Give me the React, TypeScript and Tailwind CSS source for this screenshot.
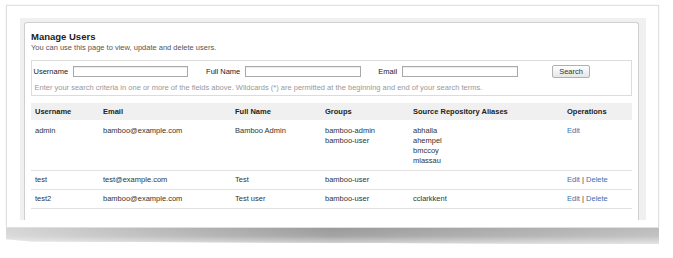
const users = [
  {
    username: "admin",
    email: "bamboo@example.com",
    fullName: "Bamboo Admin",
    groups: ["bamboo-admin", "bamboo-user"],
    aliases: ["abhalla", "ahempel", "bmccoy", "mlassau"],
    canDelete: false,
  },
  {
    username: "test",
    email: "test@example.com",
    fullName: "Test",
    groups: ["bamboo-user"],
    aliases: [],
    canDelete: true,
  },
  {
    username: "test2",
    email: "bamboo@example.com",
    fullName: "Test user",
    groups: ["bamboo-user"],
    aliases: ["cclarkkent"],
    canDelete: true,
  },
];

function SearchInput({ className = "" }: { className?: string }) {
  return (
    <input
      type="text"
      className={`h-[11px] border border-[#a9a9a9] bg-white shadow-[inset_0_1px_1px_rgba(0,0,0,0.08)] outline-none ${className}`}
    />
  );
}

export default function App() {
  return (
    <div className="h-[258px] w-[673px] overflow-hidden bg-white pl-[6px] pt-[5px] font-['Liberation_Sans',Arial,sans-serif] text-[7.5px] leading-[10px] text-[#333]">
      <div className="w-[653px]">
        <div className="h-[223px] border border-[#e0e0e0] bg-white pl-[13px] pt-[12px] shadow-[0_0_2px_rgba(0,0,0,0.08)]">
          <div className="h-[202px] w-[626px] bg-[#f0f0f0] pl-[4px] pt-[4px]">
            <div className="h-full w-[615px] rounded-t-[3px] border-l border-r border-t border-[#cfcfcf] bg-white px-[6px] pt-[8px]">
              <h1 className="text-[9.5px] font-bold leading-[12px] text-[#222]">Manage Users</h1>
              <p className="leading-[10px] text-[#555]">You can use this page to view, update and delete users.</p>

              <div className="mt-[7px] border border-[#dcdcdc] pb-[2px] pl-[1.5px] pt-[4px]">
                <div className="flex h-[13px] items-center">
                  <label className="text-[#222]">Username</label>
                  <SearchInput className="ml-[5px] w-[115px]" />
                  <label className="ml-[18px] text-[#222]">Full Name</label>
                  <SearchInput className="ml-[5px] w-[116px]" />
                  <label className="ml-[17px] text-[#222]">Email</label>
                  <SearchInput className="ml-[5px] w-[116px]" />
                  <button
                    type="button"
                    className="ml-[34px] h-[13px] w-[38px] rounded-[2px] border border-[#b0b0b0] bg-linear-to-b from-white to-[#e6e6e6] text-[7.5px] leading-[11px] text-[#333]"
                  >
                    Search
                  </button>
                </div>
                <p className="mt-[5px] pl-[1px] text-[#999]">
                  Enter your search criteria in one or more of the fields above. Wildcards (*) are permitted at the beginning and end of your search terms.
                </p>
              </div>

              <table className="mt-[7px] w-[601px] table-fixed border-collapse text-left">
                <colgroup>
                  <col className="w-[68px]" />
                  <col className="w-[132px]" />
                  <col className="w-[90px]" />
                  <col className="w-[88px]" />
                  <col className="w-[154px]" />
                  <col className="w-[69px]" />
                </colgroup>
                <thead>
                  <tr className="bg-[#f0f0f0]">
                    {["Username", "Email", "Full Name", "Groups", "Source Repository Aliases", "Operations"].map((h) => (
                      <th key={h} className="pb-[3px] pl-[4px] pt-[4px] font-bold text-[#222]">
                        {h}
                      </th>
                    ))}
                  </tr>
                </thead>
                <tbody>
                  {users.map((u, i) => {
                    const pad = i === 0 ? "pt-[6px] pb-[4px]" : "py-[4px]";
                    return (
                      <tr key={u.username} className="border-b border-[#e2e2e2] align-top">
                        <td className={`pl-[4px] ${pad}`}>{u.username}</td>
                        <td className={`pl-[4px] ${pad}`}>{u.email}</td>
                        <td className={`pl-[4px] ${pad}`}>{u.fullName}</td>
                        <td className={`pl-[4px] ${pad}`}>
                          {u.groups.map((g) => (
                            <div key={g}>{g}</div>
                          ))}
                        </td>
                        <td className={`pl-[4px] ${pad}`}>
                          {u.aliases.map((a) => (
                            <div key={a}>{a}</div>
                          ))}
                        </td>
                        <td className={`pl-[4px] ${pad}`}>
                          <a href="#" className="text-[#3b73af]">Edit</a>
                          {u.canDelete && (
                            <>
                              <span className="text-[#333]"> | </span>
                              <a href="#" className="text-[#3b73af]">Delete</a>
                            </>
                          )}
                        </td>
                      </tr>
                    );
                  })}
                </tbody>
              </table>
            </div>
          </div>
        </div>
        <div className="h-[16px] w-[653px] bg-linear-to-r from-[#d6d6d6] via-[#9a9a9a] to-[#bdbdbd] [clip-path:polygon(0_0,100%_0,100%_100%,4%_85%,0_70%)]">
          <div className="h-full w-full bg-linear-to-b from-transparent via-white/10 to-white/60" />
        </div>
      </div>
    </div>
  );
}
